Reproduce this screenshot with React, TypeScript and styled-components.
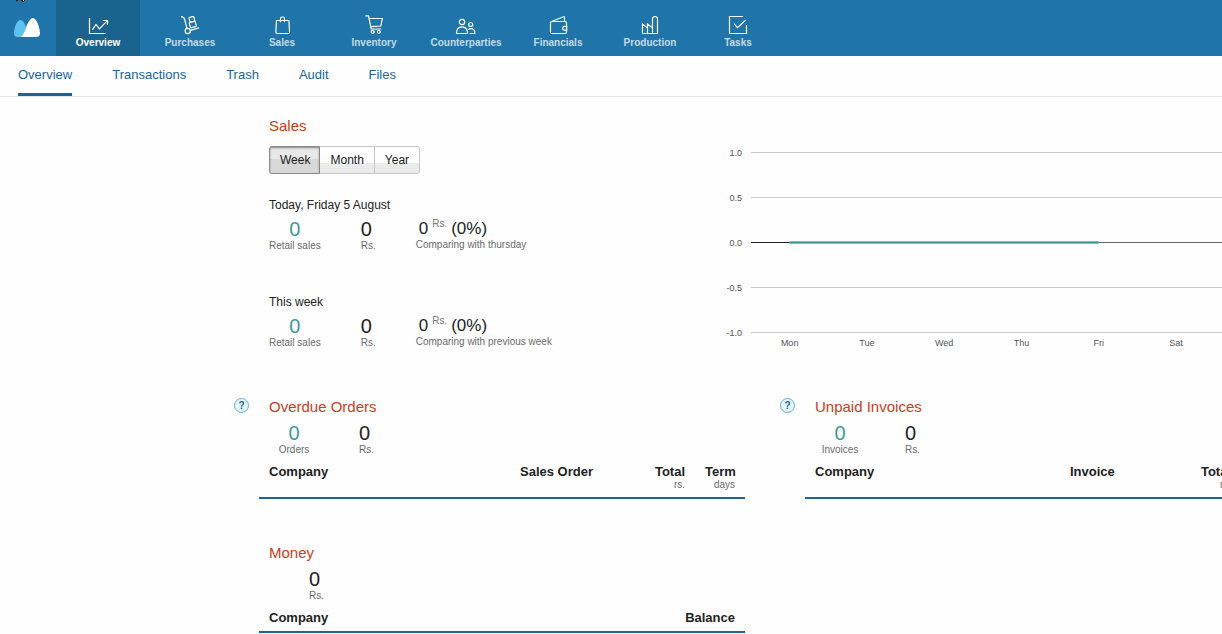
import React, { useState } from "react";
import styled, { createGlobalStyle } from "styled-components";

const GlobalStyle = createGlobalStyle`
  * { box-sizing: border-box; }
  body {
    margin: 0;
    background: #fefefe;
    color: #222;
    font-family: "Liberation Sans", Arial, sans-serif;
    font-size: 12px;
    overflow-x: hidden;
  }
`;

const TopBar = styled.header`
  display: flex;
  height: 56px;
  background: #1f74a9;
`;

const LogoLink = styled.a`
  display: block;
  width: 56px;
  height: 56px;
  flex: none;
`;

const MainNav = styled.nav`
  display: flex;
  gap: 8px;
`;

const NavItem = styled.a<{ $active?: boolean; $narrow?: boolean }>`
  display: flex;
  flex-direction: column;
  align-items: center;
  width: ${(p) => (p.$narrow ? 76 : 84)}px;
  padding-top: 13px;
  background: ${(p) => (p.$active ? "#1b638f" : "transparent")};
  color: ${(p) => (p.$active ? "#fff" : "#c3dcec")};
  font-size: 10px;
  font-weight: 700;
  line-height: 12px;
  text-decoration: none;
`;

const NavIcon = styled.svg`
  width: 28px;
  height: 24px;
  fill: none;
  stroke: #fff;
  stroke-width: 1.2;
`;

const SubNav = styled.nav`
  display: flex;
  gap: 40px;
  height: 41px;
  padding-left: 18px;
  border-bottom: 1px solid #e6e6e6;
`;

const SubLink = styled.a<{ $active?: boolean }>`
  height: 40px;
  border-bottom: 3px solid ${(p) => (p.$active ? "#1b6598" : "transparent")};
  color: #1b6598;
  font-size: 13px;
  line-height: 37px;
  text-decoration: none;
`;

const Dashboard = styled.main`
  padding: 19px 0 0 234px;
  overflow: hidden;
`;

const SalesRow = styled.section`
  display: grid;
  grid-template-columns: 492px minmax(570px, 1fr);
  margin-bottom: 37px;
`;

const SalesSummary = styled.div`
  padding-left: 35px;
`;

const Title = styled.h2`
  margin: 0;
  color: #c9401b;
  font-size: 15px;
  font-weight: 400;
  line-height: 20px;
`;

const PeriodSwitch = styled.div`
  display: inline-flex;
  margin: 10px 0 23px;
  height: 28px;
  vertical-align: top;
`;

const PeriodButton = styled.button<{ $pressed: boolean }>`
  padding: 0 10px;
  margin-left: -1px;
  border: 1px solid ${(p) => (p.$pressed ? "#8a8a8a" : "#c6c6c6")};
  background: ${(p) =>
    p.$pressed
      ? "linear-gradient(#e8e8e8 0 45%, #d8d8d8 45%)"
      : "linear-gradient(#fefefe 0 62%, #ebebeb 62%)"};
  box-shadow: ${(p) => (p.$pressed ? "inset 0 1px 2px #888" : "none")};
  position: relative;
  z-index: ${(p) => (p.$pressed ? 1 : 0)};
  color: #222;
  font: inherit;
  &:first-child { margin-left: 0; padding-right: 9px; border-radius: 3px 0 0 3px; }
  &:last-child { border-radius: 0 3px 3px 0; }
`;

const Period = styled.div`
  & + & { margin-top: 42px; }
`;

const PeriodTitle = styled.div`
  line-height: 16px;
  margin-bottom: 5px;
`;

const Stats = styled.div<{ $inset?: boolean }>`
  display: flex;
  gap: 40px;
  padding-left: ${(p) => (p.$inset ? 40 : 0)}px;
`;

const CountStat = styled.div`
  min-width: 50px;
  text-align: center;
`;

const SumStat = styled.div``;

const Figure = styled.div<{ $accent?: boolean }>`
  color: ${(p) => (p.$accent ? "#3f9b99" : "#222")};
  font-size: 20px;
  line-height: 22px;
`;

const Caption = styled.div`
  color: #6c6c6c;
  font-size: 10px;
  line-height: 12px;
`;

const Change = styled.div`
  display: flex;
  gap: 4px;
  padding-left: 3px;
  font-size: 17px;
  line-height: 21px;
`;

const Unit = styled.span`
  color: #777;
  font-size: 10px;
  line-height: 12px;
`;

const Chart = styled.svg`
  display: block;
  width: 570px;
  height: 220px;
  margin-top: 24px;
  font-size: 9px;
  fill: #555;
`;

const PanelGrid = styled.div`
  display: grid;
  grid-template-columns: repeat(2, minmax(511px, 1fr));
  gap: 44px 35px;
`;

const Panel = styled.section`
  display: grid;
  grid-template-columns: 15px 1fr;
  column-gap: 10px;
`;

const HelpButton = styled.button`
  width: 15px;
  height: 15px;
  margin-top: 1px;
  padding: 0;
  border: 1px solid #6aaed0;
  border-radius: 50%;
  background: #e6f8fd;
  color: #1b6598;
  font: bold 10px/13px "Liberation Sans", Arial, sans-serif;
`;

const PanelBody = styled.div`
  grid-column: 2;
`;

const PanelHead = styled.div`
  display: grid;
  gap: 5px;
  padding: 0 10px 8px;
`;

const DataTable = styled.table`
  width: 100%;
  table-layout: fixed;
  border-collapse: collapse;
  border-bottom: 2px solid #1b6598;
`;

const HeadCell = styled.th<{ $width?: number; $right?: boolean }>`
  width: ${(p) => (p.$width ? `${p.$width}px` : "auto")};
  padding: 0 10px 6px;
  font-size: 13px;
  line-height: 15px;
  text-align: ${(p) => (p.$right ? "right" : "left")};
  vertical-align: top;
  white-space: nowrap;
`;

const HeadUnit = styled(Caption)`
  font-weight: 400;
`;

const NAV = [
  {
    label: "Overview",
    icon: (
      <>
        <path d="M5.5 5v15.500h16" />
        <path d="M8.300 16.800l3.700-5.300 3.500 4.300 7.800-8.200M18.700 7.500h4.800v4.600" />
      </>
    ),
  },
  {
    label: "Purchases",
    icon: (
      <>
        <path d="M5 3.700c2 .2 3.200 1 3.700 2.800l2.200 8.900M14.400 17.400l8.600-2.500" />
        <circle cx="11.700" cy="18" r="2.600" />
        <rect x="13.400" y="3.900" width="5" height="4.800" rx="1" transform="rotate(-15 16 6.300)" />
        <rect x="13.700" y="8.800" width="6.200" height="5.400" rx="1" transform="rotate(-15 16.800 11.500)" />
      </>
    ),
  },
  {
    label: "Sales",
    icon: (
      <>
        <path d="M8.500 7.500h12.400l.6 11.500a1.500 1.500 0 0 1-1.500 1.500H9.300A1.500 1.500 0 0 1 7.800 19z" />
        <path d="M12.500 9.300V5.500q0-1.500 1.500-1.500h1q1.500 0 1.500 1.500v3.800" />
      </>
    ),
  },
  {
    label: "Inventory",
    icon: (
      <>
        <path d="M5.300 2.800H8.500l2.700 13.200h10M9 5.500h13.300l-1.500 7.500-10.200.6" />
        <circle cx="12.700" cy="18.800" r="1.500" />
        <circle cx="18.800" cy="18.800" r="1.500" />
      </>
    ),
  },
  {
    label: "Counterparties",
    icon: (
      <>
        <circle cx="10" cy="9" r="2.700" />
        <circle cx="18.700" cy="11.500" r="2" />
        <path d="M4.500 20.500c0-4.500 2.300-6.700 5.500-6.700s5.500 2.200 5.500 6.700zM16 16.800c.7-.8 1.700-1.200 2.800-1.200 2.500 0 4.100 1.700 4.100 4.900h-5.200" />
      </>
    ),
  },
  {
    label: "Financials",
    icon: (
      <>
        <path d="M22.500 13.300V10q0-1.500-1.500-1.500H8Q6.500 8.500 6.500 10v9q0 1.500 1.500 1.500h13q1.500 0 1.500-1.500v-1.800" />
        <path d="M7 8.800l12.500-5q1-.3 1 .7v4M22.700 13.300h-2.500a2 2 0 0 0 0 3.900h2.500z" />
      </>
    ),
  },
  {
    label: "Production",
    icon: (
      <path d="M6.500 20.500V11l5 4v5.500M11.500 15v-4l5 4M16.500 20.500V6a2.500 2.500 0 0 1 5 0v14.500z M6.500 20.500h10" />
    ),
  },
  {
    label: "Tasks",
    icon: <path d="M18.800 3.500H5.500v17h17v-8.600M10 10.600l3.500 4 8-7.400" />,
  },
];

const SUB_NAV = ["Overview", "Transactions", "Trash", "Audit", "Files"];
const PERIODS = ["Week", "Month", "Year"];
const DAYS = ["Mon", "Tue", "Wed", "Thu", "Fri", "Sat", "Sun"];
const LEVELS = ["1.0", "0.5", "0.0", "-0.5", "-1.0"];

const PLOT_LEFT = 25;
const PLOT_WIDTH = 541;
const DAY_STEP = PLOT_WIDTH / DAYS.length;
const dayX = (i: number) => PLOT_LEFT + DAY_STEP * (i + 0.5);

function Logo() {
  return (
    <svg width="56" height="56" aria-hidden="true">
      <path d="M16 0h2v1h-2zM21 0h4v1h-1v1h-2v-1h-1z" fill="#111" />
      <path d="M23 0h1v1h-1z" fill="#fff" />
      <path d="M14 33c0-5 2.800-13 6.500-13 2.600 0 4.500 4 5.500 7l-3 8-3 2h-2.500c-2.500 0-3.500-1.500-3.500-4z" fill="#5bc3f2" />
      <path d="M19.500 37c2-.2 3-1.500 4.300-4 2.400-5 4.700-15 9-15 4.200 0 7.200 11 7.200 15 0 2.500-1.200 4-3.700 4z" fill="#fff" />
    </svg>
  );
}

function Summary({ title, note }: { title: string; note: string }) {
  return (
    <Period>
      <PeriodTitle>{title}</PeriodTitle>
      <Stats>
        <CountStat>
          <Figure $accent>0</Figure>
          <Caption>Retail sales</Caption>
        </CountStat>
        <SumStat>
          <Figure>0</Figure>
          <Caption>Rs.</Caption>
        </SumStat>
        <div>
          <Change>
            <span>0</span>
            <Unit>Rs.</Unit>
            <span>(0%)</span>
          </Change>
          <Caption>{note}</Caption>
        </div>
      </Stats>
    </Period>
  );
}

function SalesChart() {
  return (
    <Chart role="img" aria-label="Sales by day">
      {LEVELS.map((level, i) => (
        <g key={level}>
          <text x="16" y={16 + i * 45} textAnchor="end">{level}</text>
          <rect x={PLOT_LEFT} y={12 + i * 45} width={PLOT_WIDTH} height="1" fill={level === "0.0" ? "#666" : "#ccc"} />
        </g>
      ))}
      <rect x={PLOT_LEFT} y="102" width={DAY_STEP / 2} height="1" fill="#222" />
      <rect x={dayX(0)} y="101" width={DAY_STEP * 4} height="3" fill="#7fc1c0" />
      <rect x={dayX(0)} y="102" width={DAY_STEP * 4} height="1" fill="#3b9492" />
      {DAYS.map((day, i) => (
        <text key={day} x={dayX(i)} y="206" textAnchor="middle">{day}</text>
      ))}
    </Chart>
  );
}

interface Column {
  name: string;
  unit?: string;
  width?: number;
  right?: boolean;
}

function OrdersTable({ columns }: { columns: Column[] }) {
  return (
    <DataTable>
      <thead>
        <tr>
          {columns.map((c) => (
            <HeadCell key={c.name} scope="col" $width={c.width} $right={c.right}>
              {c.name}
              {c.unit && <HeadUnit>{c.unit}</HeadUnit>}
            </HeadCell>
          ))}
        </tr>
      </thead>
    </DataTable>
  );
}

function ReportPanel({ title, counted, help, columns }: { title: string; counted?: string; help?: boolean; columns: Column[] }) {
  return (
    <Panel>
      {help && <HelpButton aria-label={`Help: ${title}`}>?</HelpButton>}
      <PanelBody>
        <PanelHead>
          <Title>{title}</Title>
          <Stats $inset={!counted}>
            {counted && (
              <CountStat>
                <Figure $accent>0</Figure>
                <Caption>{counted}</Caption>
              </CountStat>
            )}
            <SumStat>
              <Figure>0</Figure>
              <Caption>Rs.</Caption>
            </SumStat>
          </Stats>
        </PanelHead>
        <OrdersTable columns={columns} />
      </PanelBody>
    </Panel>
  );
}

export default function App() {
  const [period, setPeriod] = useState("Week");
  return (
    <>
      <GlobalStyle />
      <TopBar>
        <LogoLink href="#" aria-label="Home">
          <Logo />
        </LogoLink>
        <MainNav>
          {NAV.map(({ label, icon }, i) => (
            <NavItem key={label} href="#" $active={i === 0} $narrow={label === "Tasks"}>
              <NavIcon viewBox="0 0 28 24" aria-hidden="true">{icon}</NavIcon>
              {label}
            </NavItem>
          ))}
        </MainNav>
      </TopBar>
      <SubNav>
        {SUB_NAV.map((label, i) => (
          <SubLink key={label} href="#" $active={i === 0}>{label}</SubLink>
        ))}
      </SubNav>
      <Dashboard>
        <SalesRow>
          <SalesSummary>
            <Title>Sales</Title>
            <PeriodSwitch role="group" aria-label="Period">
              {PERIODS.map((p) => (
                <PeriodButton key={p} $pressed={p === period} aria-pressed={p === period} onClick={() => setPeriod(p)}>
                  {p}
                </PeriodButton>
              ))}
            </PeriodSwitch>
            <Summary title="Today, Friday 5 August" note="Comparing with thursday" />
            <Summary title="This week" note="Comparing with previous week" />
          </SalesSummary>
          <SalesChart />
        </SalesRow>
        <PanelGrid>
          <ReportPanel
            title="Overdue Orders"
            counted="Orders"
            help
            columns={[
              { name: "Company" },
              { name: "Sales Order", width: 125 },
              { name: "Total", unit: "rs.", width: 60, right: true },
              { name: "Term", unit: "days", width: 50, right: true },
            ]}
          />
          <ReportPanel
            title="Unpaid Invoices"
            counted="Invoices"
            help
            columns={[
              { name: "Company" },
              { name: "Invoice", width: 121 },
              { name: "Total", unit: "rs.", width: 60, right: true },
              { name: "Term", unit: "days", width: 50, right: true },
            ]}
          />
          <ReportPanel
            title="Money"
            columns={[{ name: "Company" }, { name: "Balance", width: 120, right: true }]}
          />
        </PanelGrid>
      </Dashboard>
    </>
  );
}
